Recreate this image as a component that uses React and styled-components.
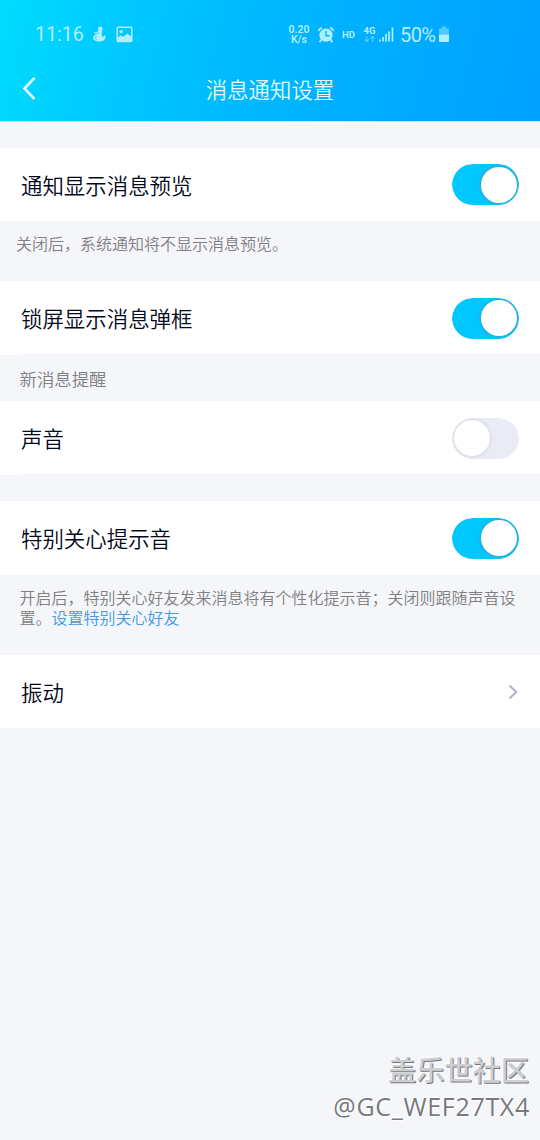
import React, { useState } from "react";
import styled, { createGlobalStyle } from "styled-components";

const GlobalStyle = createGlobalStyle`
  * {
    box-sizing: border-box;
  }

  body {
    margin: 0;
    background: #f4f6fa;
    font-family: "Noto Sans CJK SC", sans-serif;
  }
`;

const Screen = styled.div`
  display: flex;
  flex-direction: column;
  width: 540px;
  height: 1140px;
  overflow: hidden;
  background: #f4f6fa;
`;

const Header = styled.header`
  height: 122px;
  border-bottom: 1px solid #b4e8ff;
  background: linear-gradient(104deg, #00dcff 0%, #00c4ff 28%, #00b0ff 62%, #00a1ff 100%);
`;

const StatusBar = styled.div`
  display: flex;
  align-items: center;
  height: 58px;
  padding: 11px 90px 0 35px;
  color: #b0efff;
  font-family: Roboto, sans-serif;
`;

const Time = styled.span`
  width: 57px;
  font-size: 19.6px;
  line-height: 24px;
  padding-top: 1px;
`;

const StatusIcons = styled.div`
  display: flex;
  align-items: center;
  gap: 9px;
`;

const StatusRight = styled.div`
  display: flex;
  align-items: center;
  margin-left: auto;
`;

const Speed = styled.div`
  display: flex;
  flex-direction: column;
  align-items: center;
  width: 22px;
  margin: 1px 7px 0 1px;
  font-size: 10.5px;
  font-weight: 600;
  line-height: 10px;
`;

const Hd = styled.span`
  width: 21px;
  margin-left: 7px;
  font-size: 9.5px;
  font-weight: 700;
`;

const Battery = styled.span`
  width: 36px;
  margin: 0 2px 0 6px;
  font-size: 20px;
  letter-spacing: -0.6px;
  line-height: 24px;
  white-space: nowrap;
`;

const NavBar = styled.div`
  display: grid;
  grid-template-columns: 60px 1fr 60px;
  align-items: center;
  height: 62px;
  color: #e3fbff;
`;

const BackButton = styled.button`
  display: flex;
  padding: 0 0 1px 20px;
  border: 0;
  background: none;
  color: inherit;
`;

const Title = styled.h1`
  margin: 0;
  font-size: 21.4px;
  font-weight: 350;
  line-height: 32px;
  text-align: center;
`;

const List = styled.main`
  display: flex;
  flex-direction: column;
  padding-top: 26px;
`;

/* the short white strip under a row is what its inset divider leaves free */
const Row = styled.div`
  display: flex;
  align-items: center;
  justify-content: space-between;
  height: ${({ $height }) => $height || 73}px;
  padding: ${({ $top = 1 }) => $top}px 21px ${({ $inset }) => ($inset ? 1 : 0)}px;
  background: ${({ $inset }) =>
    $inset
      ? "linear-gradient(#fff, #fff) 0 0 / 100% calc(100% - 1px) no-repeat, linear-gradient(#fff, #fff) 0 0 / 21px 100% no-repeat"
      : "#fff"};
`;

const Label = styled.span`
  color: #03081a;
  font-size: 21.45px;
  font-weight: 350;
  line-height: 32px;
`;

const Note = styled.p`
  height: ${({ $height }) => $height}px;
  margin: 0;
  padding: ${({ $padding }) => $padding};
  color: #808080;
  font-family: Roboto, "Noto Sans CJK SC", sans-serif;
  font-size: ${({ $size }) => $size || 16}px;
  font-weight: 350;
  line-height: 20px;
`;

const Link = styled.a`
  color: #4499e8;
`;

const Gap = styled.div`
  height: 26px;
`;

const Track = styled.button`
  display: flex;
  align-items: center;
  justify-content: ${({ $on }) => ($on ? "flex-end" : "flex-start")};
  width: 67px;
  height: 41px;
  padding: 0 2px;
  border: 0;
  border-radius: 21px;
  background: ${({ $on }) => ($on ? "#00c8ff" : "#e9ebf5")};
`;

const Thumb = styled.span`
  width: 36px;
  height: 36px;
  border-radius: 50%;
  background: #fff;
  box-shadow: 0 0 3px 1px
    ${({ $on }) => ($on ? "rgba(105, 135, 165, 0.6)" : "rgba(150, 155, 180, 0.25)")};
`;

const Clip = styled.span`
  display: flex;
  overflow: hidden;
  border-radius: 21px;
`;

const Watermark = styled.footer`
  display: flex;
  flex-direction: column;
  align-items: flex-end;
  margin-top: auto;
  padding: 0 11px 15px 0;
`;

const Community = styled.span`
  color: #cdced1;
  font-size: 28.2px;
  font-weight: 500;
  line-height: 38px;
  text-shadow: 1px 1px 0 #77787a, -1px -1px 0 #fff;
`;

const Author = styled.span`
  margin-right: -1px;
  color: #78797b;
  font-family: "Open Sans", "Noto Sans", sans-serif;
  font-size: 25px;
  letter-spacing: 0.7px;
  line-height: 37px;
  text-shadow: 1px 1px 0 #fff, -1px -1px 0 #fff;
`;

function Switch({ defaultOn }) {
  const [on, setOn] = useState(defaultOn);

  return (
    <Clip>
      <Track
        type="button"
        role="switch"
        aria-checked={on}
        $on={on}
        onClick={() => setOn(!on)}
      >
        <Thumb $on={on} />
      </Track>
    </Clip>
  );
}

const FigureIcon = () => (
  <svg width="15" height="17" viewBox="0 0 15 17" fill="currentColor">
    <circle cx="8.3" cy="3" r="2.4" />
    <path d="M6.5 4.5 10 5 9.6 8.5l1.2 3 1.7-2.3 1.2.5c.2 3.2-2.5 6-6.2 6C4 15.7 1.2 14.3 1.2 11.8c0-1.6 1.2-2.6 2.8-3.3L7 7.2Z" />
    <path d="M2.500 7 4.500 7.200 7.500 4.800" fill="none" stroke="currentColor" strokeWidth="1.3" />
    <path d="m4.500 10-1.300 2 1.600 1.600" fill="none" stroke="#00c8ff" strokeWidth=".7" />
  </svg>
);

const PictureIcon = () => (
  <svg width="17" height="17" viewBox="0 0 17 17">
    <rect x="1.2" y="1.2" width="14.6" height="14.2" rx="1" fill="none" stroke="currentColor" strokeWidth="1.5" />
    <circle cx="5.2" cy="5.6" r="1.7" fill="currentColor" />
    <path d="M1 12 5 9.300l2.200 1.400L11.500 7.500 16 11.500v4H1Z" fill="currentColor" />
  </svg>
);

const AlarmIcon = () => (
  <svg width="18" height="18" viewBox="0 0 18 18">
    <circle cx="9" cy="9.2" r="6.6" fill="currentColor" />
    <path d="M1.500 5A5 5 0 0 1 5 1.700M16.500 5A5 5 0 0 0 13 1.700M4.500 13.500l-2 2.700M13.500 13.500l2 2.700" fill="none" stroke="currentColor" strokeWidth="1.8" />
    <path d="M9 5V9.700h3.500" fill="none" stroke="#00b4ff" strokeWidth="1.4" />
  </svg>
);

const NetworkIcon = () => (
  <svg width="31" height="18" viewBox="0 0 31 18">
    <text x="0.5" y="7.5" fill="currentColor" fontFamily="Roboto" fontSize="9.5" fontWeight="700">4G</text>
    <path d="M3.700 10v5.500M1.500 13.300l2.200 2.200 2.200-2.200M9.500 16v-5.500M7.300 12.700l2.200-2.200 2.200 2.200" fill="none" stroke="currentColor" strokeWidth="1.1" opacity=".5" />
    <path d="M17 15.500v-2M20 15.500v-4.500M23 15.500V8M26 15.500V5.500M29.500 15.500V1.500" stroke="currentColor" strokeWidth="1.7" />
  </svg>
);

const BatteryIcon = () => (
  <svg width="12" height="17" viewBox="0 0 12 17" fill="currentColor">
    <path d="M3.500.500h5v2H11v6H1v-6h2.500Z" opacity=".45" />
    <path d="M1 8.500h10V15a1 1 0 0 1-1 1H2a1 1 0 0 1-1-1Z" />
  </svg>
);

const BackIcon = () => (
  <svg width="17" height="25" viewBox="0 0 17 25" fill="none" stroke="currentColor" strokeWidth="2.7">
    <path d="M14.500 1.800 4.500 12.500l10 10.700" />
  </svg>
);

const ArrowIcon = () => (
  <svg width="11" height="16" viewBox="0 0 11 16" fill="none" stroke="#b0b3bf" strokeWidth="2">
    <path d="m1.500 1.500 6.700 6.500-6.700 6.500" />
  </svg>
);

function App() {
  return (
    <>
      <GlobalStyle />
      <Screen>
        <Header>
          <StatusBar>
            <Time>11:16</Time>
            <StatusIcons>
              <FigureIcon />
              <PictureIcon />
            </StatusIcons>
            <StatusRight>
              <Speed>
                <span>0.20</span>
                <span>K/s</span>
              </Speed>
              <AlarmIcon />
              <Hd>HD</Hd>
              <NetworkIcon />
              <Battery>50%</Battery>
              <BatteryIcon />
            </StatusRight>
          </StatusBar>
          <NavBar>
            <BackButton type="button" aria-label="返回">
              <BackIcon />
            </BackButton>
            <Title>消息通知设置</Title>
          </NavBar>
        </Header>

        <List>
          <Row $top={0}>
            <Label>通知显示消息预览</Label>
            <Switch defaultOn />
          </Row>
          <Note $height={60} $padding="14px 16px">
            关闭后，系统通知将不显示消息预览。
          </Note>

          <Row $height={74} $inset>
            <Label>锁屏显示消息弹框</Label>
            <Switch defaultOn />
          </Row>
          <Note $height={46} $padding="15px 19.5px" $size={17.4}>
            新消息提醒
          </Note>
          <Row $height={74} $inset>
            <Label>声音</Label>
            <Switch defaultOn={false} />
          </Row>
          <Gap />

          <Row $height={74} $top={0}>
            <Label>特别关心提示音</Label>
            <Switch defaultOn />
          </Row>
          <Note $height={80} $padding="14px 19.5px">
            开启后，特别关心好友发来消息将有个性化提示音；关闭则跟随声音设置。
            <Link>设置特别关心好友</Link>
          </Note>

          <Row>
            <Label>振动</Label>
            <ArrowIcon />
          </Row>
        </List>

        <Watermark>
          <Community>盖乐世社区</Community>
          <Author>@GC_WEF27TX4</Author>
        </Watermark>
      </Screen>
    </>
  );
}

export default App;
